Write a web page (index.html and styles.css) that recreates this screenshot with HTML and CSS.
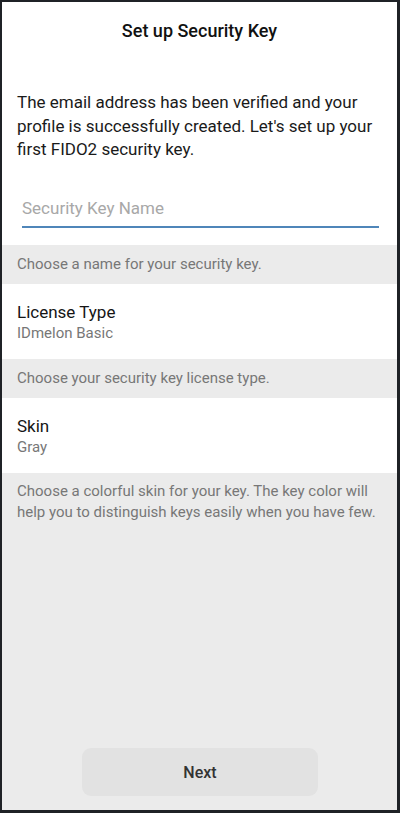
FILE: index.html
```html
<!DOCTYPE html>
<html>
<head>
<meta charset="utf-8">
<link rel="stylesheet" href="styles.css">
</head>
<body>
<div class="frame">
  <div class="top">
    <h1 class="title">Set up Security Key</h1>
    <p class="intro">The email address has been verified and your profile is successfully created. Let's set up your first FIDO2 security key.</p>
    <div class="field">
      <div class="placeholder">Security Key Name</div>
    </div>
  </div>
  <div class="hint">Choose a name for your security key.</div>
  <div class="item">
    <div class="item-title">License Type</div>
    <div class="item-value">IDmelon Basic</div>
  </div>
  <div class="hint">Choose your security key license type.</div>
  <div class="item">
    <div class="item-title">Skin</div>
    <div class="item-value">Gray</div>
  </div>
  <div class="rest">
    <div class="hint-last">Choose a colorful skin for your key. The key color will help you to distinguish keys easily when you have few.</div>
    <button class="next">Next</button>
  </div>
</div>
</body>
</html>
```

FILE: styles.css
```css
html, body {
  margin: 0;
  padding: 0;
  background: #1f2226;
}
body {
  font-family: Roboto, "Noto Sans", sans-serif;
}
.frame {
  box-sizing: border-box;
  width: 400px;
  height: 813px;
  border-style: solid;
  border-color: #1f2226;
  border-width: 2px 3px 3px 2px;
  background: #ffffff;
  display: flex;
  flex-direction: column;
}
.top {
  padding: 17px 18px 17px 15px;
}
.title {
  margin: 0;
  font-size: 18px;
  font-weight: 500;
  line-height: 24px;
  text-align: center;
  color: #111;
  padding-left: 3px;
}
.intro {
  margin: 48px 0 0 0;
  font-size: 17px;
  line-height: 23.5px;
  color: #1a1a1a;
}
.field {
  margin: 34px 0 0 5px;
  padding-bottom: 6px;
  border-bottom: 2px solid #4f86b9;
}
.placeholder {
  font-size: 17px;
  line-height: 24px;
  color: #a8a8a8;
}
.hint {
  background: #ebebeb;
  height: 39px;
  box-sizing: border-box;
  padding: 0 15px;
  font-size: 15px;
  line-height: 39px;
  color: #777;
}
.item {
  height: 75px;
  box-sizing: border-box;
  padding: 18px 15px 0;
}
.item-title {
  font-size: 17px;
  line-height: 21px;
  color: #151515;
}
.item-value {
  font-size: 15px;
  line-height: 21px;
  color: #777;
}
.rest {
  flex: 1;
  background: #ebebeb;
  display: flex;
  flex-direction: column;
  padding: 8px 14px 14px 15px;
}
.hint-last {
  font-size: 15px;
  line-height: 21.5px;
  color: #777;
}
.next {
  margin-top: auto;
  align-self: center;
  width: 236px;
  height: 48px;
  border: none;
  border-radius: 9px;
  background: #e2e2e2;
  font-family: Roboto, "Noto Sans", sans-serif;
  font-size: 16px;
  font-weight: 500;
  color: #333;
}
```
